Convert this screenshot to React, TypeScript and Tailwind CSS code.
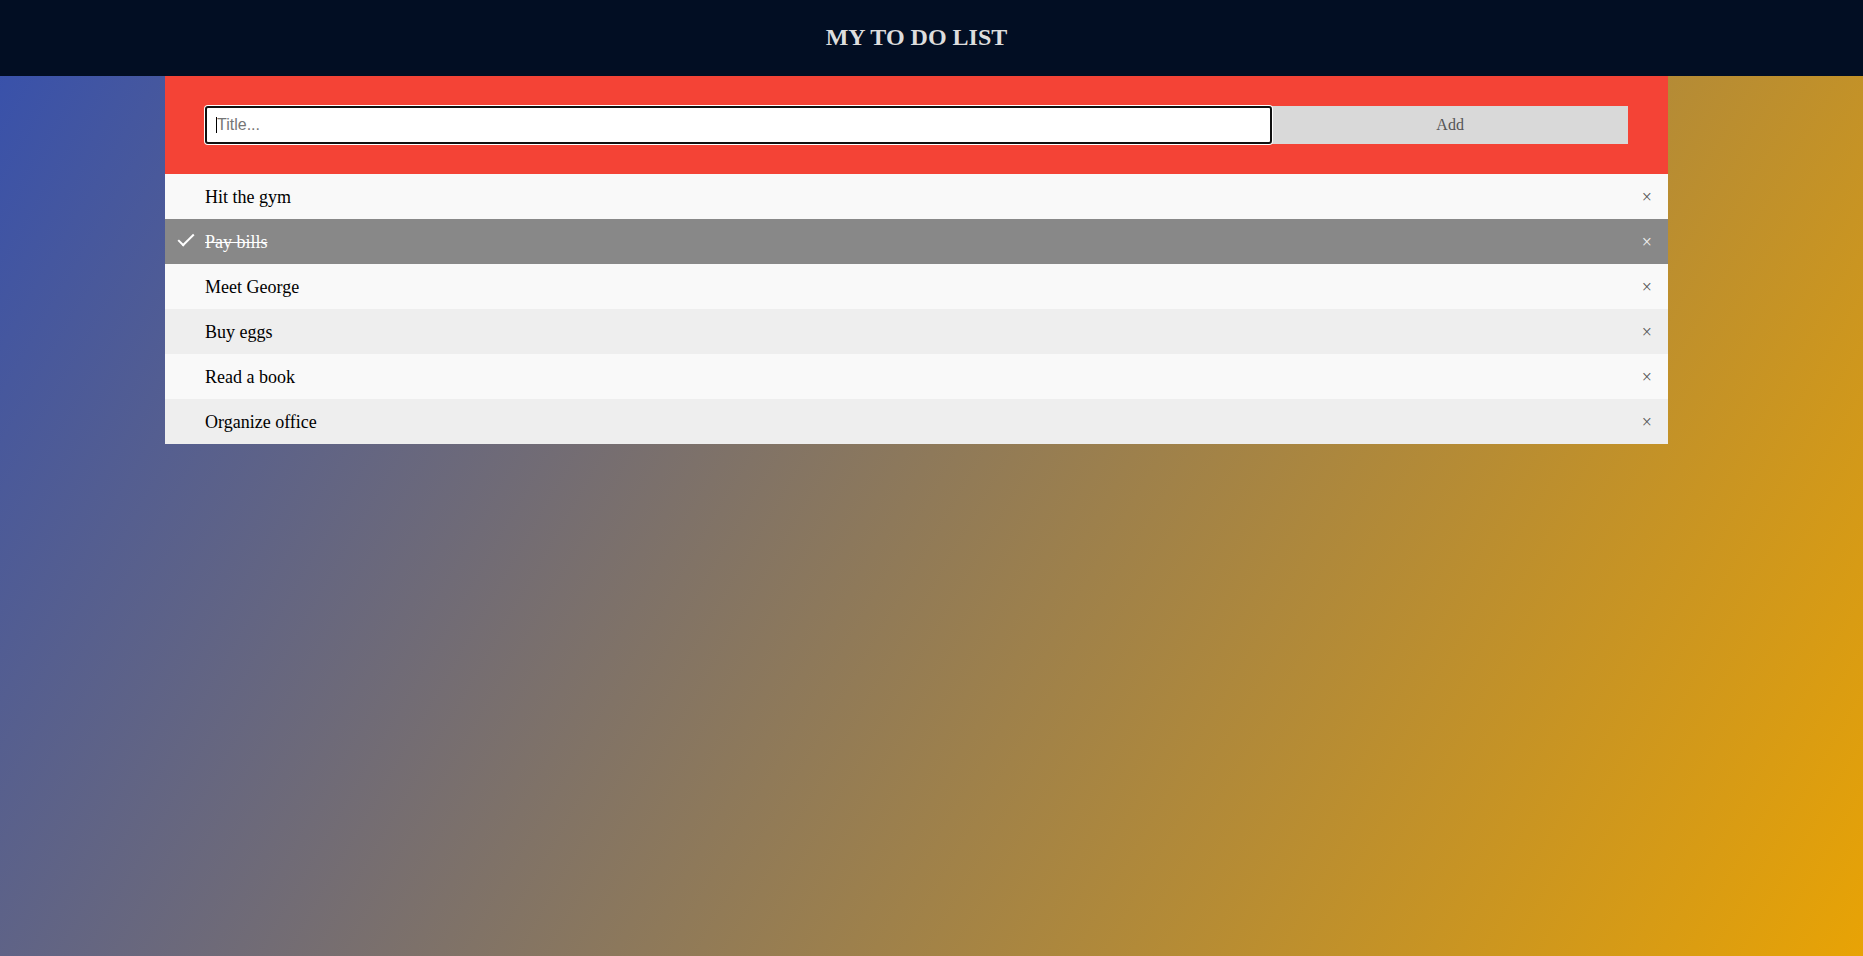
import React from "react";

const items = [
  { text: "Hit the gym", checked: false },
  { text: "Pay bills", checked: true },
  { text: "Meet George", checked: false },
  { text: "Buy eggs", checked: false },
  { text: "Read a book", checked: false },
  { text: "Organize office", checked: false },
];

export default function App() {
  return (
    <div
      className="min-h-screen w-full bg-[linear-gradient(120deg,#3650ad,#e8a305)]"
      style={{ fontFamily: '"Liberation Serif", "Times New Roman", serif' }}
    >
      <div className="h-[76px] w-full bg-[#020e23] flex items-center justify-center pr-[30px] pb-[2px]">
        <h2 className="text-[24px] font-bold text-[#dddddd] leading-none">MY TO DO LIST</h2>
      </div>
      <div className="ml-[165px] w-[1503px]">
        <div className="bg-[#f44336] px-[40px] py-[30px] flex">
          <div className="relative w-[75%] h-[38px] bg-white rounded-[3px] border-2 border-[#101010] shadow-[0_0_0_1px_#ffffff] flex items-center pl-[9px]">
            <span className="w-px h-[16px] bg-black"></span>
            <span
              className="text-[16px] text-[#757575] leading-none"
              style={{ fontFamily: '"Liberation Sans", Arial, sans-serif' }}
            >
              Title...
            </span>
          </div>
          <div className="w-[25%] h-[38px] bg-[#d9d9d9] text-[#555555] text-[16px] flex items-center justify-center">
            Add
          </div>
        </div>
        <ul>
          {items.map((it, i) => (
            <li
              key={it.text}
              className={
                "relative h-[45px] flex items-center pl-[40px] pt-[2px] text-[18px] " +
                (it.checked
                  ? "bg-[#888888] text-white"
                  : i % 2 === 0
                  ? "bg-[#f9f9f9] text-black"
                  : "bg-[#eeeeee] text-black")
              }
            >
              {it.checked && (
                <span className="absolute top-[11px] left-[17px] h-[16px] w-[8px] border-white border-solid border-r-2 border-b-2 rotate-45"></span>
              )}
              <span className={it.checked ? "line-through" : ""}>{it.text}</span>
              <span className={"ml-auto pr-[16px] " + (it.checked ? "text-[#f4f4f4]" : "text-[#555555]")}>×</span>
            </li>
          ))}
        </ul>
      </div>
    </div>
  );
}
